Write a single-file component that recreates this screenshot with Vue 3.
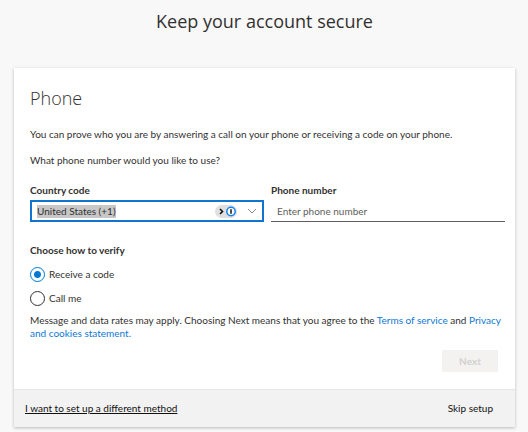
<template>
  <main class="security-page">
    <h1 class="page-title">Keep your account secure</h1>

    <form class="card" @submit.prevent>
      <div class="card-body">
        <h2 class="card-title">Phone</h2>
        <p class="intro">You can prove who you are by answering a call on your phone or receiving a code on your phone.</p>
        <p class="intro">What phone number would you like to use?</p>

        <div class="fields">
          <div class="field">
            <label for="country">Country code</label>
            <div class="combo">
              <input id="country" ref="countryInput" v-model="country" type="text" role="combobox" aria-expanded="false" autocomplete="off" />
              <button type="button" class="fill-badge" aria-label="Autofill">
                <svg width="22" height="13" viewBox="0 0 22 13">
                  <path d="M5 4l2.5 2.5L5 9" fill="none" stroke="#111" stroke-width="1.6" />
                  <circle cx="16" cy="6.5" r="4.2" fill="#fff" stroke="#1683f2" stroke-width="1.5" />
                  <path d="M16 4.3v4.4" stroke="#222" stroke-width="1.6" />
                </svg>
              </button>
              <button type="button" class="toggle" aria-label="Show countries">
                <svg width="10" height="6" viewBox="0 0 10 6">
                  <path d="M1 1l4 4 4-4" fill="none" stroke="#888" stroke-width="1" />
                </svg>
              </button>
            </div>
          </div>
          <div class="field">
            <label for="phone">Phone number</label>
            <input id="phone" v-model="phone" class="phone-input" type="tel" placeholder="Enter phone number" />
          </div>
        </div>

        <fieldset class="methods">
          <legend>Choose how to verify</legend>
          <label v-for="item in methods" :key="item.value" class="method">
            <input v-model="method" type="radio" name="method" :value="item.value" />
            <span>{{ item.label }}</span>
          </label>
        </fieldset>

        <p class="terms">
          Message and data rates may apply. Choosing Next means that you agree to the
          <a href="#terms">Terms of service</a> and <a href="#privacy">Privacy and cookies statement.</a>
        </p>

        <div class="actions">
          <button type="submit" class="next" :disabled="!phone">Next</button>
        </div>
      </div>

      <footer class="card-footer">
        <a href="#method" class="other-method">I want to set up a different method</a>
        <a href="#skip" class="skip">Skip setup</a>
      </footer>
    </form>
  </main>
</template>

<script setup>
import { ref, onMounted } from 'vue'

const country = ref('United States (+1)')
const phone = ref('')
const method = ref('code')
const countryInput = ref(null)

const methods = [
  { value: 'code', label: 'Receive a code' },
  { value: 'call', label: 'Call me' }
]

onMounted(() => {
  countryInput.value.focus()
  countryInput.value.select()
})
</script>

<style>
body {
  margin: 0;
  background: #f8f8f8;
}
</style>

<style scoped>
.security-page {
  box-sizing: border-box;
  padding: 8px 13px 4px 14px;
  font-family: Lato, "Open Sans", sans-serif;
  font-size: 10px;
  line-height: 13px;
  color: #323130;
}

.page-title,
.card-title {
  font-family: "Open Sans", "Noto Sans", sans-serif;
  font-size: 18px;
}

.page-title {
  margin: 0 0 34px;
  font-weight: 400;
  line-height: 26px;
  text-align: center;
}

.card {
  background: #fff;
  box-shadow: 0 1px 3px rgba(0, 0, 0, 0.25);
}

.card-body {
  padding: 18px 10px 17px 16px;
}

.card-title {
  margin: 0 0 18px;
  font-weight: 300;
  line-height: 24px;
}

.intro {
  margin: 0 0 13px;
}

.fields {
  display: grid;
  grid-template-columns: 1fr 1fr;
  gap: 7px;
  margin-top: 17px;
}

.field label,
.methods legend {
  display: block;
  padding: 0;
  font-weight: 700;
}

.field label {
  margin-bottom: 3px;
}

.combo {
  display: flex;
  align-items: center;
  box-sizing: border-box;
  height: 22px;
  padding: 0 5px;
  border: 2px solid #0f75d0;
}

input,
button {
  font: inherit;
  color: inherit;
}

.combo input {
  flex: 1;
  min-width: 0;
  padding: 0;
  border: 0;
  outline: 0;
  background: none;
}

.combo input::selection {
  background: #c8c8c8;
  color: #323130;
}

.fill-badge,
.toggle {
  display: flex;
  padding: 0;
  border: 0;
  background: none;
}

.fill-badge {
  margin-right: 10px;
  border-radius: 7px;
  background: #e0e0e0;
}

.phone-input {
  display: block;
  box-sizing: border-box;
  width: 100%;
  height: 22px;
  padding: 0 6px;
  border: 0;
  border-bottom: 1px solid #605e5c;
  outline: 0;
  background: none;
}

.phone-input::placeholder {
  color: #605e5c;
  opacity: 1;
}

.methods {
  min-width: 0;
  margin: 22px 0 0;
  padding: 0;
  border: 0;
}

.methods legend {
  margin-bottom: 5px;
}

.method {
  display: flex;
  align-items: center;
  gap: 4px;
  height: 24px;
}

.method input {
  box-sizing: border-box;
  width: 15px;
  height: 15px;
  margin: 0;
  appearance: none;
  border: 1px solid #323130;
  border-radius: 50%;
  background: #fff;
}

.method input:checked {
  border-color: #0078d4;
  background: radial-gradient(circle, #0078d4 3px, #fff 4px);
}

.terms {
  margin: 4px 0 10px;
}

.terms a {
  color: #0f78d4;
  text-decoration: none;
}

.actions {
  display: flex;
  justify-content: flex-end;
  padding-right: 7px;
}

.next {
  width: 56px;
  height: 22px;
  padding: 0;
  border: 0;
  border-radius: 1px;
  background: #f3f2f1;
  font-weight: 700;
}

.next:disabled {
  color: #d2d0ce;
}

.card-footer {
  display: flex;
  align-items: center;
  justify-content: space-between;
  padding: 12px 22px 12px 11px;
  border-top: 1px solid #e6e6e6;
  background: #f2f2f2;
}

.card-footer a {
  color: #111;
  text-decoration: none;
}

.card-footer .other-method {
  text-decoration: underline;
}
</style>
